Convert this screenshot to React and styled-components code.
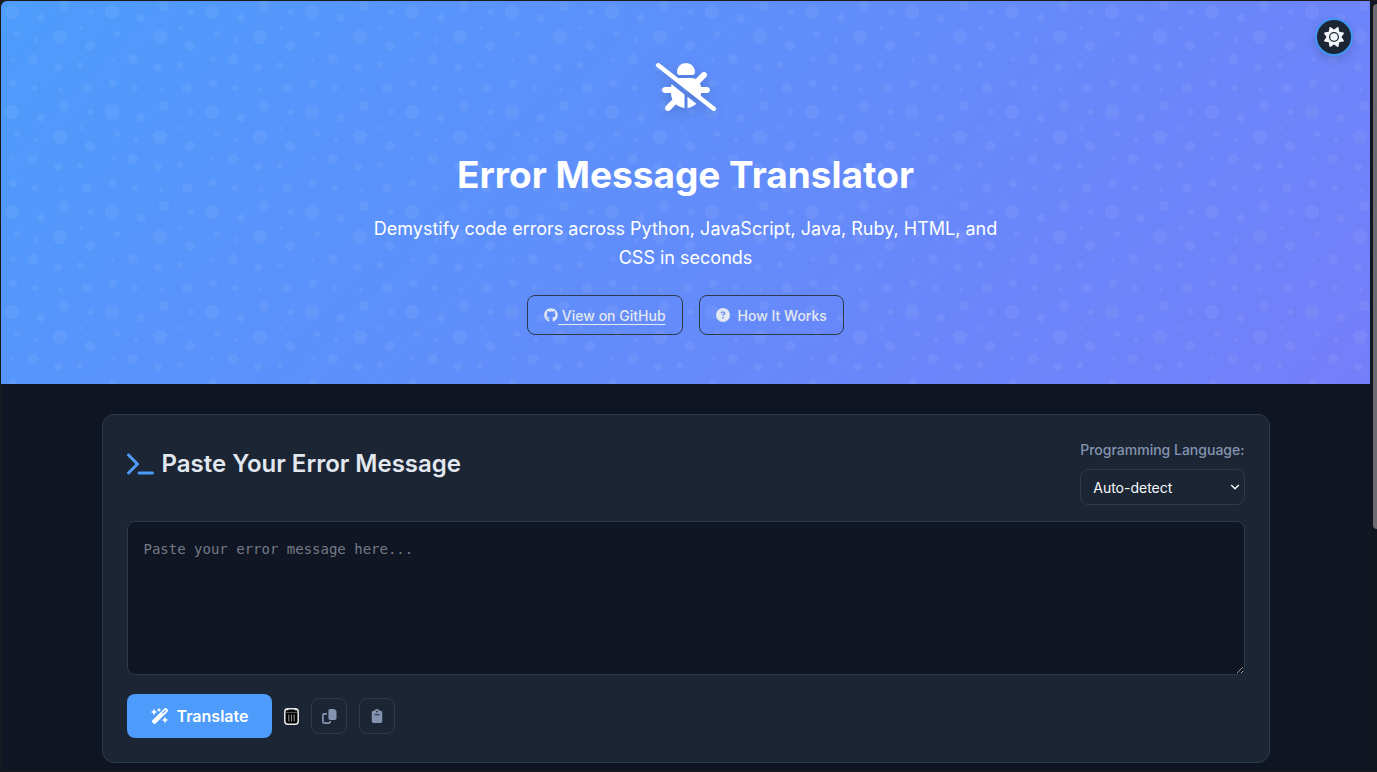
import React from "react";
import styled, { createGlobalStyle, css } from "styled-components";
import {
  FaBugSlash,
  FaCircleQuestion,
  FaClipboard,
  FaGithub,
  FaSun,
  FaTerminal,
  FaWandMagicSparkles,
} from "react-icons/fa6";

const color = {
  frame: "#1b1b1f",
  page: "#101624",
  card: "#1c2534",
  border: "#2d3a4b",
  primary: "#4d9bfb",
  text: "#e2e8f0",
  muted: "#8494b0",
};

const GlobalStyle = createGlobalStyle`
  *, *::before, *::after { box-sizing: border-box; }
  body {
    margin: 0;
    background: ${color.frame};
    color: ${color.text};
    font-family: Inter, "Liberation Sans", sans-serif;
  }
  button, select, textarea { font: inherit; }
`;

const Frame = styled.div`
  display: grid;
  grid-template-columns: 1fr 7px;
  min-height: 100vh;
  padding: 1px 0 1px 1px;
`;

const Page = styled.div`
  position: relative;
  min-width: 0;
  background: ${color.page};
  border-top-left-radius: 6px;
  overflow: hidden;
`;

const ScrollTrack = styled.div`
  background: #11151f;
  padding: 3px 0 0 3px;
`;

const ScrollThumb = styled.div`
  height: 525px;
  background: #6b6b6f;
  border-radius: 4px 0 0 4px;
`;

const Hero = styled.header`
  position: relative;
  display: flex;
  flex-direction: column;
  align-items: center;
  padding: 62px 16px 49px;
  background: linear-gradient(135deg, #4d9cfc 0%, #757ef9 100%);
  text-align: center;
`;

const Bubbles = styled.svg`
  position: absolute;
  inset: 0;
  width: 100%;
  height: 100%;
  fill: #fff;
  fill-opacity: 0.06;
`;

const HeroIcon = styled(FaBugSlash)`
  position: relative;
  display: block;
  width: 60px;
  height: 48px;
  color: #fff;
  filter: drop-shadow(0 4px 6px rgba(0, 0, 0, 0.15));
`;

const Title = styled.h1`
  position: relative;
  margin: 40px 0 0;
  color: #fff;
  font-size: 37px;
  font-weight: 700;
  line-height: 48px;
`;

const Tagline = styled.p`
  position: relative;
  max-width: 650px;
  margin: 15px 0 23px;
  color: #fff;
  font-size: 18px;
  line-height: 29px;
`;

const HeroActions = styled.div`
  position: relative;
  display: flex;
  flex-wrap: wrap;
  justify-content: center;
  gap: 16px;
`;

const outline = css`
  display: inline-flex;
  align-items: center;
  height: 40px;
  padding: 0 16px;
  background: transparent;
  border: 1px solid ${color.border};
  border-radius: 8px;
  color: ${color.text};
  font-size: 14px;
  font-weight: 500;
  cursor: pointer;
`;

const OutlineLink = styled.a`
  ${outline}
  text-decoration: none;

  span {
    text-decoration: underline;
    text-underline-offset: 3px;
    white-space: pre;
  }
`;

const OutlineButton = styled.button`
  ${outline}
  gap: 8px;
`;

const ThemeToggle = styled.button`
  position: absolute;
  top: 17px;
  right: 17px;
  display: grid;
  place-items: center;
  width: 38px;
  height: 38px;
  padding: 0;
  background: ${color.card};
  border: 2px solid #3f97f3;
  border-radius: 50%;
  color: #f1f5f9;
  font-size: 20px;
  box-shadow: 0 4px 8px rgba(0, 0, 0, 0.15);
  cursor: pointer;
`;

const Main = styled.main`
  max-width: 1200px;
  margin: 0 auto;
  padding: 30px 16px 7px;
`;

const Card = styled.section`
  padding: 24px;
  background: ${color.card};
  border: 1px solid ${color.border};
  border-radius: 12px;
  box-shadow: 0 4px 12px rgba(0, 0, 0, 0.1);
`;

const CardHeader = styled.div`
  display: flex;
  align-items: center;
  justify-content: space-between;
  gap: 16px;
  margin-bottom: 16px;
`;

const CardTitle = styled.h2`
  display: flex;
  align-items: center;
  gap: 8px;
  margin: 0 0 16px;
  font-size: 24px;
  font-weight: 600;
  line-height: 32px;

  svg {
    width: 27px;
    height: 24px;
    color: ${color.primary};
  }
`;

const Field = styled.div`
  display: flex;
  flex-direction: column;
  gap: 8px;
`;

const Label = styled.label`
  color: ${color.muted};
  font-size: 14px;
  font-weight: 500;
  line-height: 22px;
`;

const SelectWrap = styled.div`
  position: relative;

  svg {
    position: absolute;
    top: 14px;
    right: 5px;
    width: 10px;
    height: 8px;
    pointer-events: none;
  }
`;

const Select = styled.select`
  appearance: none;
  display: block;
  width: 100%;
  height: 36px;
  padding: 0 24px 0 12px;
  background: ${color.card};
  border: 1px solid ${color.border};
  border-radius: 8px;
  color: #f5f8fc;
  font-size: 14px;
`;

const ErrorInput = styled.textarea`
  display: block;
  width: 100%;
  height: 154px;
  padding: 16px;
  background: ${color.page};
  border: 1px solid ${color.border};
  border-radius: 8px;
  color: ${color.text};
  font-family: "DejaVu Sans Mono", "Liberation Mono", monospace;
  font-size: 14px;
  line-height: 22px;
  resize: vertical;

  &::placeholder {
    color: #757a84;
  }
`;

const Toolbar = styled.div`
  display: flex;
  align-items: center;
  gap: 12px;
  margin-top: 19px;
`;

const PrimaryButton = styled.button`
  display: inline-flex;
  align-items: center;
  gap: 8px;
  height: 44px;
  padding: 0 24px;
  background: ${color.primary};
  border: 0;
  border-radius: 8px;
  color: #fff;
  font-size: 16px;
  font-weight: 600;
  cursor: pointer;

  svg {
    width: 18px;
    height: 16px;
  }
`;

const IconButton = styled.button`
  display: grid;
  place-items: center;
  width: ${(p) => (p.$bare ? "15px" : "36px")};
  height: 36px;
  padding: 0;
  background: transparent;
  border: ${(p) => (p.$bare ? "0" : `1px solid ${color.border}`)};
  border-radius: 8px;
  color: ${color.muted};
  font-size: 14px;
  cursor: pointer;
`;

const bubbles = [
  [11, 11, 7], [59, 36, 7], [16, 33, 3], [79, 64, 3], [34, 87, 3], [90, 11, 3],
  [12, 82, 4], [40, 17, 4], [57, 66, 4], [63, 5, 5], [86, 87, 5], [32, 58, 5],
  [89, 45, 5], [80, 27, 2], [60, 89, 2], [35, 39, 2], [12, 58, 2],
];

function BubblePattern() {
  return (
    <Bubbles aria-hidden="true">
      <defs>
        <pattern id="bubbles" width="100" height="100" patternUnits="userSpaceOnUse">
          {bubbles.map(([x, y, r]) => (
            <circle key={`${x}-${y}`} cx={x} cy={y} r={r} />
          ))}
        </pattern>
      </defs>
      <rect width="100%" height="100%" fill="url(#bubbles)" fillOpacity="1" />
    </Bubbles>
  );
}

function TrashIcon() {
  return (
    <svg width="15" height="17" viewBox="0 0 15 17" aria-hidden="true">
      <rect x="0.8" y="0.8" width="13.4" height="15.4" rx="3" fill="#000" stroke="#e9e9ec" strokeWidth="1.5" />
      <path d="M2 1.6h2.5M10.5 1.6H13" stroke="#e9e9ec" strokeWidth="1.2" />
      <path d="M1.5 4.4h12" stroke="#77777c" strokeWidth="0.8" />
      <path d="M4.8 6.5v7M7.5 6.5v7M10.2 6.5v7" stroke="#8e8e93" strokeWidth="1.1" />
    </svg>
  );
}

function CopyIcon() {
  return (
    <svg width="15" height="15" viewBox="0 0 15 15" aria-hidden="true">
      <path
        d="M5 4.8H2.2A1.3 1.3 0 0 0 .9 6.1v6.7a1.3 1.3 0 0 0 1.3 1.3h4.7a1.3 1.3 0 0 0 1.3-1.3V12"
        fill="none"
        stroke="currentColor"
        strokeWidth="1.7"
      />
      <path
        d="M8.2 0h3.6a1.6 1.6 0 0 1 1.1.5l1.1 1.1a1.6 1.6 0 0 1 .5 1.1v6.5a1.8 1.8 0 0 1-1.8 1.8H8.2a1.8 1.8 0 0 1-1.8-1.8V1.8A1.8 1.8 0 0 1 8.2 0z"
        fill="currentColor"
      />
    </svg>
  );
}

export default function App() {
  return (
    <>
      <GlobalStyle />
      <Frame>
        <Page>
          <Hero>
            <BubblePattern />
            <HeroIcon />
            <Title>Error Message Translator</Title>
            <Tagline>
              Demystify code errors across Python, JavaScript, Java, Ruby, HTML, and CSS in seconds
            </Tagline>
            <HeroActions>
              <OutlineLink href="#github">
                <FaGithub />
                <span> View on GitHub</span>
              </OutlineLink>
              <OutlineButton type="button">
                <FaCircleQuestion />
                How It Works
              </OutlineButton>
            </HeroActions>
            <ThemeToggle type="button" aria-label="Toggle theme">
              <FaSun />
            </ThemeToggle>
          </Hero>
          <Main>
            <Card>
              <CardHeader>
                <CardTitle>
                  <FaTerminal />
                  Paste Your Error Message
                </CardTitle>
                <Field>
                  <Label htmlFor="language">Programming Language:</Label>
                  <SelectWrap>
                    <Select id="language" defaultValue="auto">
                      <option value="auto">Auto-detect</option>
                      <option value="python">Python</option>
                      <option value="javascript">JavaScript</option>
                      <option value="java">Java</option>
                      <option value="ruby">Ruby</option>
                      <option value="html">HTML</option>
                      <option value="css">CSS</option>
                    </Select>
                    <svg viewBox="0 0 10 8" fill="none" stroke="#f5f8fc" strokeWidth="1.4" aria-hidden="true">
                      <path d="M1.2 2L5 5.8L8.8 2" />
                    </svg>
                  </SelectWrap>
                </Field>
              </CardHeader>
              <ErrorInput aria-label="Error message" placeholder="Paste your error message here..." />
              <Toolbar>
                <PrimaryButton type="button">
                  <FaWandMagicSparkles />
                  Translate
                </PrimaryButton>
                <IconButton type="button" $bare aria-label="Clear">
                  <TrashIcon />
                </IconButton>
                <IconButton type="button" aria-label="Copy">
                  <CopyIcon />
                </IconButton>
                <IconButton type="button" aria-label="Paste">
                  <FaClipboard />
                </IconButton>
              </Toolbar>
            </Card>
          </Main>
        </Page>
        <ScrollTrack aria-hidden="true">
          <ScrollThumb />
        </ScrollTrack>
      </Frame>
    </>
  );
}
